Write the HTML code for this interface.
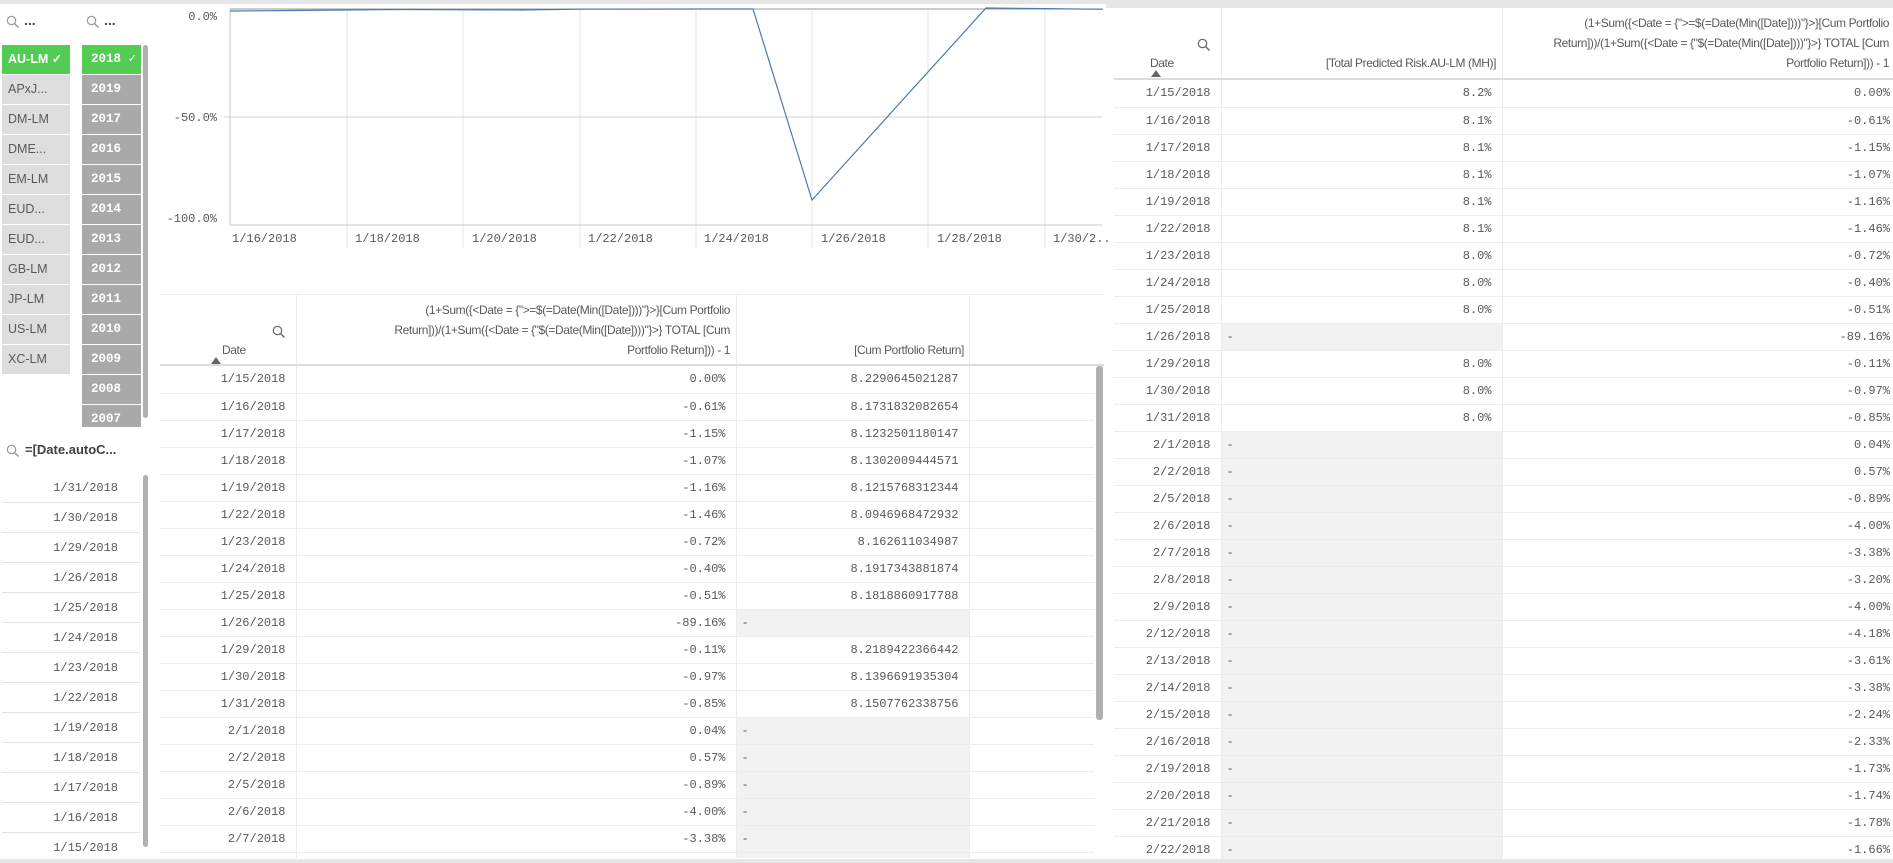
<!DOCTYPE html>
<html><head><meta charset="utf-8">
<style>
*{margin:0;padding:0;box-sizing:border-box}
body{width:1893px;height:863px;position:relative;overflow:hidden;background:#fff;font-family:"Liberation Sans",sans-serif;color:#595959}
.a{position:absolute}
.it{position:absolute;left:2px;width:68px;height:29px;background:#dddddd;font-size:12.5px;line-height:29px;padding-left:6px;color:#595959}
.yr{position:absolute;left:82px;width:59px;height:29px;background:#a9a9a9;font-family:"Liberation Mono",monospace;font-size:12.5px;font-weight:bold;line-height:29px;padding-left:9px;color:#fff}
.dl{position:absolute;left:2px;width:138px;height:30px;border-bottom:1px solid #e3e3e3;text-align:right;padding-right:22px;line-height:30px;font-family:"Liberation Mono",monospace;font-size:12px}
table{border-collapse:collapse;table-layout:fixed;position:absolute}
td{height:27px;border-bottom:1px solid #ececec;border-right:1px solid #ececec;font-family:"Liberation Mono",monospace;font-size:12px;text-align:right;padding-right:10px;white-space:nowrap;overflow:hidden;color:#595959}
td.g{background:#f2f2f2;text-align:left;padding-left:5px}
td.e{border-right:none}
.hd{font-size:12px;letter-spacing:-0.4px;line-height:20px;text-align:right;color:#595959}
</style></head><body>
<div class="a" style="left:0;top:0;width:1893px;height:4px;background:#e6e6e6"></div>
<div class="a" style="left:1106px;top:0;width:787px;height:8px;background:#e6e6e6"></div>
<div class="a" style="left:0;top:859px;width:1893px;height:4px;background:#e6e6e6"></div>

<svg class="a" style="left:6px;top:15px" width="14" height="14"><circle cx="5.5" cy="5.5" r="4.2" fill="none" stroke="#999" stroke-width="1.2"/><line x1="8.6" y1="8.6" x2="12.5" y2="12.5" stroke="#999" stroke-width="1.4"/></svg>
<div class="a" style="left:24px;top:12px;font-weight:bold;font-size:14px;color:#404040">...</div>
<svg class="a" style="left:86px;top:15px" width="14" height="14"><circle cx="5.5" cy="5.5" r="4.2" fill="none" stroke="#999" stroke-width="1.2"/><line x1="8.6" y1="8.6" x2="12.5" y2="12.5" stroke="#999" stroke-width="1.4"/></svg>
<div class="a" style="left:104px;top:12px;font-weight:bold;font-size:14px;color:#404040">...</div>

<div class="it" style="top:45px;background:#52cc52;color:#fff;font-weight:bold">AU-LM ✓</div>
<div class="it" style="top:75px">APxJ...</div>
<div class="it" style="top:105px">DM-LM</div>
<div class="it" style="top:135px">DME...</div>
<div class="it" style="top:165px">EM-LM</div>
<div class="it" style="top:195px">EUD...</div>
<div class="it" style="top:225px">EUD...</div>
<div class="it" style="top:255px">GB-LM</div>
<div class="it" style="top:285px">JP-LM</div>
<div class="it" style="top:315px">US-LM</div>
<div class="it" style="top:345px">XC-LM</div>

<div class="a" style="left:82px;top:45px;width:60px;height:382px;overflow:hidden">
<div class="yr" style="left:0;top:0;background:#52cc52">2018 ✓</div>
<div class="yr" style="left:0;top:30px">2019</div>
<div class="yr" style="left:0;top:60px">2017</div>
<div class="yr" style="left:0;top:90px">2016</div>
<div class="yr" style="left:0;top:120px">2015</div>
<div class="yr" style="left:0;top:150px">2014</div>
<div class="yr" style="left:0;top:180px">2013</div>
<div class="yr" style="left:0;top:210px">2012</div>
<div class="yr" style="left:0;top:240px">2011</div>
<div class="yr" style="left:0;top:270px">2010</div>
<div class="yr" style="left:0;top:300px">2009</div>
<div class="yr" style="left:0;top:330px">2008</div>
<div class="yr" style="left:0;top:360px">2007</div>
</div>
<div class="a" style="left:143px;top:45px;width:5px;height:373px;background:#b0b0b0;border-radius:3px"></div>

<svg class="a" style="left:6px;top:444px" width="14" height="14"><circle cx="5.5" cy="5.5" r="4.2" fill="none" stroke="#999" stroke-width="1.2"/><line x1="8.6" y1="8.6" x2="12.5" y2="12.5" stroke="#999" stroke-width="1.4"/></svg>
<div class="a" style="left:25px;top:442px;font-weight:bold;font-size:13px;color:#404040">=[Date.autoC...</div>
<div class="a" style="left:0;top:473px;width:142px;height:386px;overflow:hidden">
<div class="dl" style="top:0">1/31/2018</div>
<div class="dl" style="top:30px">1/30/2018</div>
<div class="dl" style="top:60px">1/29/2018</div>
<div class="dl" style="top:90px">1/26/2018</div>
<div class="dl" style="top:120px">1/25/2018</div>
<div class="dl" style="top:150px">1/24/2018</div>
<div class="dl" style="top:180px">1/23/2018</div>
<div class="dl" style="top:210px">1/22/2018</div>
<div class="dl" style="top:240px">1/19/2018</div>
<div class="dl" style="top:270px">1/18/2018</div>
<div class="dl" style="top:300px">1/17/2018</div>
<div class="dl" style="top:330px">1/16/2018</div>
<div class="dl" style="top:360px">1/15/2018</div>
</div>
<div class="a" style="left:143px;top:475px;width:5px;height:372px;background:#b0b0b0;border-radius:3px"></div>

<svg class="a" style="left:150px;top:0" width="960" height="260">
<g stroke="#e6e6e6" stroke-width="1">
<line x1="197" y1="9" x2="197" y2="225"/><line x1="313" y1="9" x2="313" y2="225"/><line x1="430" y1="9" x2="430" y2="225"/><line x1="546" y1="9" x2="546" y2="225"/><line x1="662" y1="9" x2="662" y2="225"/><line x1="778" y1="9" x2="778" y2="225"/><line x1="895" y1="9" x2="895" y2="225"/>
<line x1="197" y1="225" x2="197" y2="248"/><line x1="313" y1="225" x2="313" y2="248"/><line x1="430" y1="225" x2="430" y2="248"/><line x1="546" y1="225" x2="546" y2="248"/><line x1="662" y1="225" x2="662" y2="248"/><line x1="778" y1="225" x2="778" y2="248"/><line x1="895" y1="225" x2="895" y2="248"/>
</g>
<line x1="74" y1="117" x2="952" y2="117" stroke="#d0d0d0"/>
<line x1="80" y1="9" x2="952" y2="9" stroke="#999"/>
<line x1="80" y1="225" x2="952" y2="225" stroke="#c8c8c8"/>
<line x1="80" y1="9" x2="80" y2="225" stroke="#c8c8c8"/>
<polyline fill="none" stroke="#4a78b0" stroke-width="1.2" points="80,11 139,10.5 255,9.5 313,9.8 371,10 430,9.2 546,9 603,9 662,200 836,8 895,8.6 953,9.3"/>
<g font-family="Liberation Mono, monospace" font-size="12" fill="#595959" text-anchor="end">
<text x="67" y="20">0.0%</text><text x="67" y="121">-50.0%</text><text x="67" y="222">-100.0%</text>
</g>
<g font-family="Liberation Mono, monospace" font-size="12" fill="#595959">
<text x="82" y="242">1/16/2018</text><text x="205" y="242">1/18/2018</text><text x="322" y="242">1/20/2018</text><text x="438" y="242">1/22/2018</text><text x="554" y="242">1/24/2018</text><text x="671" y="242">1/26/2018</text><text x="787" y="242">1/28/2018</text><text x="903" y="242">1/30/2...</text>
</g>
</svg>

<div class="a" style="left:160px;top:294px;width:944px;height:1px;background:#ececec"></div>
<div class="a" style="left:296px;top:294px;width:1px;height:71px;background:#ececec"></div>
<div class="a" style="left:736px;top:294px;width:1px;height:71px;background:#ececec"></div>
<div class="a" style="left:969px;top:294px;width:1px;height:71px;background:#ececec"></div>
<svg class="a" style="left:272px;top:325px" width="14" height="14"><circle cx="5.5" cy="5.5" r="4.2" fill="none" stroke="#666" stroke-width="1.2"/><line x1="8.6" y1="8.6" x2="12.5" y2="12.5" stroke="#666" stroke-width="1.4"/></svg>
<div class="a hd" style="left:222px;top:340px">Date</div>
<svg class="a" style="left:211px;top:357px" width="10" height="7"><polygon points="0,7 5,0 10,7" fill="#666"/></svg>
<div class="a hd" style="left:300px;top:300px;width:430px">(1+Sum({&lt;Date = {"&gt;=$(=Date(Min([Date])))"}&gt;}[Cum Portfolio<br>Return]))/(1+Sum({&lt;Date = {"$(=Date(Min([Date])))"}&gt;} TOTAL [Cum<br>Portfolio Return])) - 1</div>
<div class="a hd" style="left:740px;top:340px;width:224px">[Cum Portfolio Return]</div>
<div class="a" style="left:160px;top:364px;width:944px;height:2px;background:#dcdcdc"></div>
<div class="a" style="left:160px;top:366px;width:934px;height:492px;overflow:hidden">
<table style="left:0;top:0;width:934px">
<colgroup><col style="width:136px"><col style="width:440px"><col style="width:233px"><col></colgroup>
<tr><td>1/15/2018</td><td>0.00%</td><td>8.2290645021287</td><td class="e"></td></tr>
<tr><td>1/16/2018</td><td>-0.61%</td><td>8.1731832082654</td><td class="e"></td></tr>
<tr><td>1/17/2018</td><td>-1.15%</td><td>8.1232501180147</td><td class="e"></td></tr>
<tr><td>1/18/2018</td><td>-1.07%</td><td>8.1302009444571</td><td class="e"></td></tr>
<tr><td>1/19/2018</td><td>-1.16%</td><td>8.1215768312344</td><td class="e"></td></tr>
<tr><td>1/22/2018</td><td>-1.46%</td><td>8.0946968472932</td><td class="e"></td></tr>
<tr><td>1/23/2018</td><td>-0.72%</td><td>8.162611034987</td><td class="e"></td></tr>
<tr><td>1/24/2018</td><td>-0.40%</td><td>8.1917343881874</td><td class="e"></td></tr>
<tr><td>1/25/2018</td><td>-0.51%</td><td>8.1818860917788</td><td class="e"></td></tr>
<tr><td>1/26/2018</td><td>-89.16%</td><td class="g">-</td><td class="e"></td></tr>
<tr><td>1/29/2018</td><td>-0.11%</td><td>8.2189422366442</td><td class="e"></td></tr>
<tr><td>1/30/2018</td><td>-0.97%</td><td>8.1396691935304</td><td class="e"></td></tr>
<tr><td>1/31/2018</td><td>-0.85%</td><td>8.1507762338756</td><td class="e"></td></tr>
<tr><td>2/1/2018</td><td>0.04%</td><td class="g">-</td><td class="e"></td></tr>
<tr><td>2/2/2018</td><td>0.57%</td><td class="g">-</td><td class="e"></td></tr>
<tr><td>2/5/2018</td><td>-0.89%</td><td class="g">-</td><td class="e"></td></tr>
<tr><td>2/6/2018</td><td>-4.00%</td><td class="g">-</td><td class="e"></td></tr>
<tr><td>2/7/2018</td><td>-3.38%</td><td class="g">-</td><td class="e"></td></tr>
<tr><td>2/8/2018</td><td>-3.20%</td><td class="g">-</td><td class="e"></td></tr>
</table>
</div>
<div class="a" style="left:1096px;top:366px;width:7px;height:354px;background:#b0b0b0;border-radius:3px"></div>

<div class="a" style="left:1221px;top:8px;width:1px;height:71px;background:#ececec"></div>
<div class="a" style="left:1502px;top:8px;width:1px;height:71px;background:#ececec"></div>
<svg class="a" style="left:1197px;top:38px" width="14" height="14"><circle cx="5.5" cy="5.5" r="4.2" fill="none" stroke="#666" stroke-width="1.2"/><line x1="8.6" y1="8.6" x2="12.5" y2="12.5" stroke="#666" stroke-width="1.4"/></svg>
<div class="a hd" style="left:1150px;top:53px">Date</div>
<svg class="a" style="left:1151px;top:70px" width="10" height="7"><polygon points="0,7 5,0 10,7" fill="#666"/></svg>
<div class="a hd" style="left:1225px;top:53px;width:271px">[Total Predicted Risk.AU-LM (MH)]</div>
<div class="a hd" style="left:1506px;top:13px;width:383px">(1+Sum({&lt;Date = {"&gt;=$(=Date(Min([Date])))"}&gt;}[Cum Portfolio<br>Return]))/(1+Sum({&lt;Date = {"$(=Date(Min([Date])))"}&gt;} TOTAL [Cum<br>Portfolio Return])) - 1</div>
<div class="a" style="left:1114px;top:78px;width:779px;height:2px;background:#dcdcdc"></div>
<div class="a" style="left:1114px;top:80px;width:779px;height:779px;overflow:hidden">
<table style="left:0;top:0;width:779px">
<colgroup><col style="width:107px"><col style="width:281px"><col></colgroup>
<tr><td>1/15/2018</td><td>8.2%</td><td class="e" style="padding-right:3px">0.00%</td></tr>
<tr><td>1/16/2018</td><td>8.1%</td><td class="e" style="padding-right:3px">-0.61%</td></tr>
<tr><td>1/17/2018</td><td>8.1%</td><td class="e" style="padding-right:3px">-1.15%</td></tr>
<tr><td>1/18/2018</td><td>8.1%</td><td class="e" style="padding-right:3px">-1.07%</td></tr>
<tr><td>1/19/2018</td><td>8.1%</td><td class="e" style="padding-right:3px">-1.16%</td></tr>
<tr><td>1/22/2018</td><td>8.1%</td><td class="e" style="padding-right:3px">-1.46%</td></tr>
<tr><td>1/23/2018</td><td>8.0%</td><td class="e" style="padding-right:3px">-0.72%</td></tr>
<tr><td>1/24/2018</td><td>8.0%</td><td class="e" style="padding-right:3px">-0.40%</td></tr>
<tr><td>1/25/2018</td><td>8.0%</td><td class="e" style="padding-right:3px">-0.51%</td></tr>
<tr><td>1/26/2018</td><td class="g">-</td><td class="e" style="padding-right:3px">-89.16%</td></tr>
<tr><td>1/29/2018</td><td>8.0%</td><td class="e" style="padding-right:3px">-0.11%</td></tr>
<tr><td>1/30/2018</td><td>8.0%</td><td class="e" style="padding-right:3px">-0.97%</td></tr>
<tr><td>1/31/2018</td><td>8.0%</td><td class="e" style="padding-right:3px">-0.85%</td></tr>
<tr><td>2/1/2018</td><td class="g">-</td><td class="e" style="padding-right:3px">0.04%</td></tr>
<tr><td>2/2/2018</td><td class="g">-</td><td class="e" style="padding-right:3px">0.57%</td></tr>
<tr><td>2/5/2018</td><td class="g">-</td><td class="e" style="padding-right:3px">-0.89%</td></tr>
<tr><td>2/6/2018</td><td class="g">-</td><td class="e" style="padding-right:3px">-4.00%</td></tr>
<tr><td>2/7/2018</td><td class="g">-</td><td class="e" style="padding-right:3px">-3.38%</td></tr>
<tr><td>2/8/2018</td><td class="g">-</td><td class="e" style="padding-right:3px">-3.20%</td></tr>
<tr><td>2/9/2018</td><td class="g">-</td><td class="e" style="padding-right:3px">-4.00%</td></tr>
<tr><td>2/12/2018</td><td class="g">-</td><td class="e" style="padding-right:3px">-4.18%</td></tr>
<tr><td>2/13/2018</td><td class="g">-</td><td class="e" style="padding-right:3px">-3.61%</td></tr>
<tr><td>2/14/2018</td><td class="g">-</td><td class="e" style="padding-right:3px">-3.38%</td></tr>
<tr><td>2/15/2018</td><td class="g">-</td><td class="e" style="padding-right:3px">-2.24%</td></tr>
<tr><td>2/16/2018</td><td class="g">-</td><td class="e" style="padding-right:3px">-2.33%</td></tr>
<tr><td>2/19/2018</td><td class="g">-</td><td class="e" style="padding-right:3px">-1.73%</td></tr>
<tr><td>2/20/2018</td><td class="g">-</td><td class="e" style="padding-right:3px">-1.74%</td></tr>
<tr><td>2/21/2018</td><td class="g">-</td><td class="e" style="padding-right:3px">-1.78%</td></tr>
<tr><td>2/22/2018</td><td class="g">-</td><td class="e" style="padding-right:3px">-1.66%</td></tr>
</table>
</div>
</body></html>
